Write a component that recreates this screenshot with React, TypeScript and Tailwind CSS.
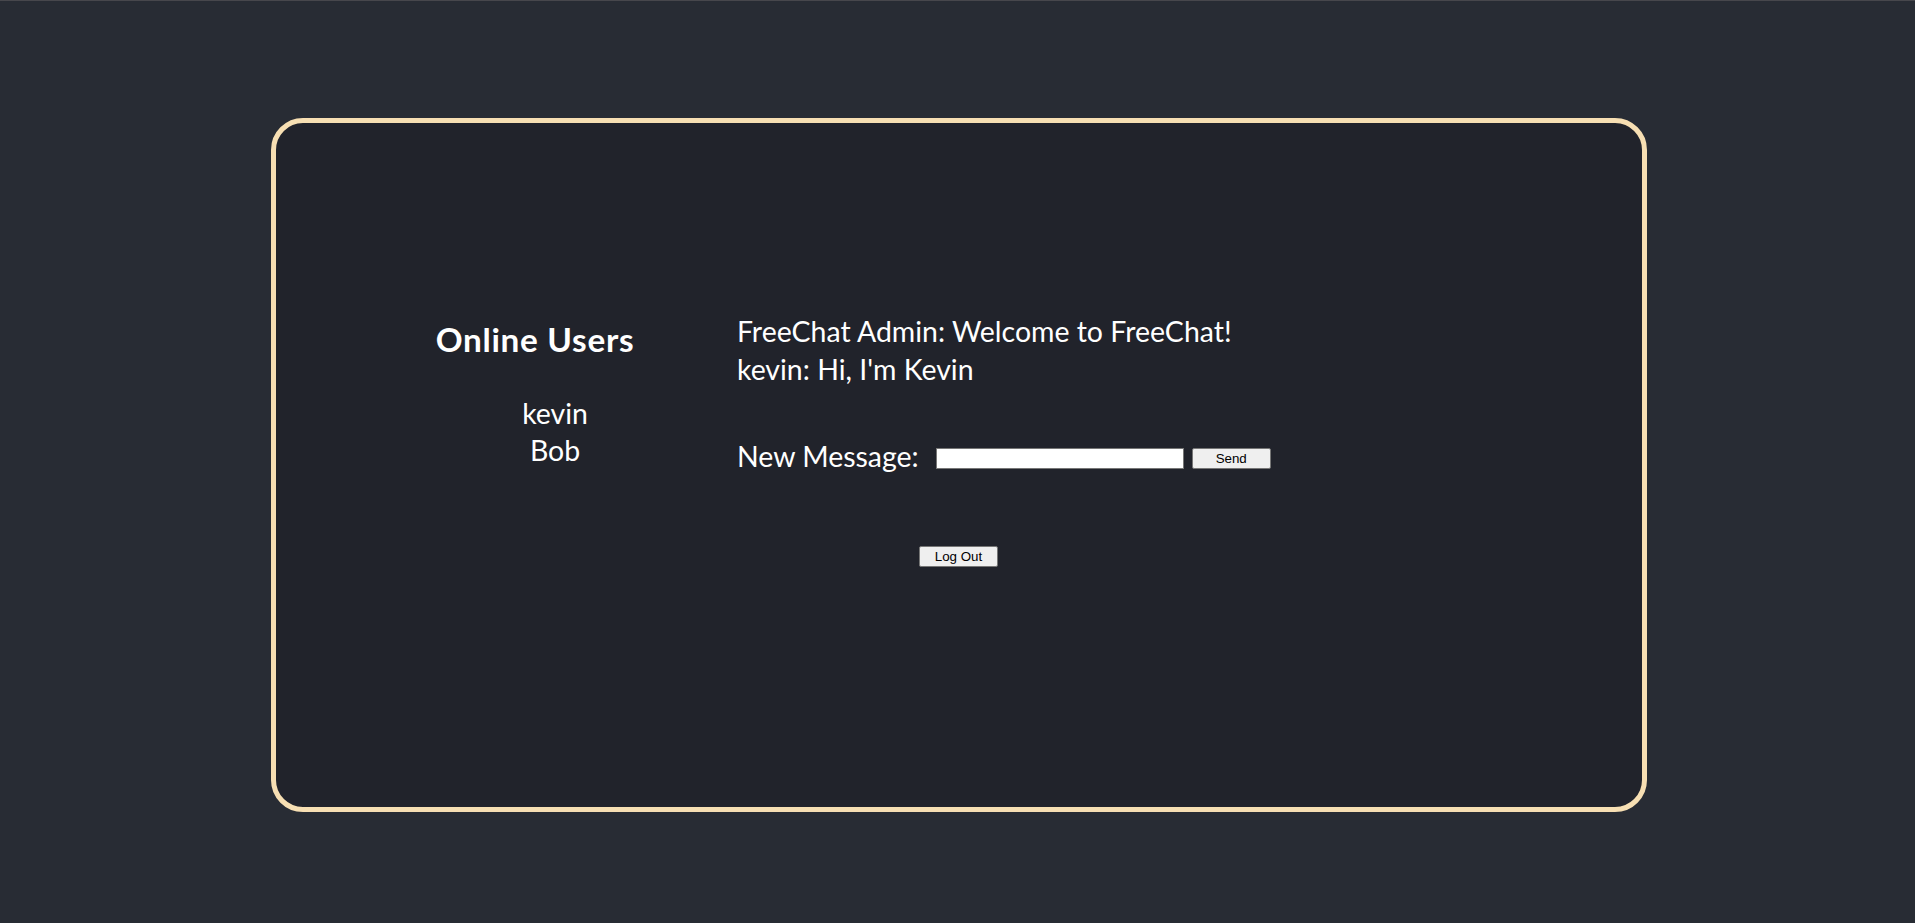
import React, { useState } from 'react';

const users = ['kevin', 'Bob'];

const initialMessages = [
  { from: 'FreeChat Admin', text: 'Welcome to FreeChat!' },
  { from: 'kevin', text: "Hi, I'm Kevin" },
];

export default function App() {
  const [messages, setMessages] = useState(initialMessages);
  const [draft, setDraft] = useState('');

  const handleSend = () => {
    if (!draft.trim()) return;
    setMessages([...messages, { from: 'kevin', text: draft }]);
    setDraft('');
  };

  return (
    <div className="min-h-[923px] bg-[#282c34] border-t border-[#47474c] pt-[117px] font-['Lato',sans-serif] text-white">
      <div className="ml-[271px] w-[1376px] h-[694px] rounded-[32px] border-[5px] border-[#f7dfb3] bg-[#21232b] pl-[139px] pt-[189px]">
        <div className="flex">
          <div className="w-[240px] pt-[5px] text-center">
            <h3 className="text-[33.3px] leading-[44px] font-bold tracking-[0.7px]">Online Users</h3>
            <ul className="mt-[34px] pl-[40px] text-[28.46px] leading-[37px]">
              {users.map((u) => (
                <li key={u}>{u}</li>
              ))}
            </ul>
          </div>
          <div className="ml-[82px]">
            <div className="text-[28.46px] leading-[38px]">
              {messages.map((m, i) => (
                <div key={i}>
                  {m.from}: {m.text}
                </div>
              ))}
            </div>
            <div className="mt-[49px] flex items-start text-[28.46px] leading-[38px]">
              <span>New Message:</span>
              <input
                type="text"
                value={draft}
                onChange={(e) => setDraft(e.target.value)}
                className="mt-[11px] ml-[17px] w-[248px] h-[21px] bg-white border border-[#767676] text-black text-[13px] px-1 outline-none"
              />
              <button
                onClick={handleSend}
                className="mt-[11px] ml-[8px] w-[79px] h-[21px] bg-[#efefef] border border-[#767676] rounded-[2px] text-black text-[13.33px] leading-none font-['Liberation_Sans',Arial,sans-serif]"
              >
                Send
              </button>
            </div>
          </div>
        </div>
        <button className="mt-[71px] ml-[504px] w-[79px] h-[21px] bg-[#efefef] border border-[#767676] rounded-[2px] text-black text-[13.33px] leading-none font-['Liberation_Sans',Arial,sans-serif]">
          Log Out
        </button>
      </div>
    </div>
  );
}
